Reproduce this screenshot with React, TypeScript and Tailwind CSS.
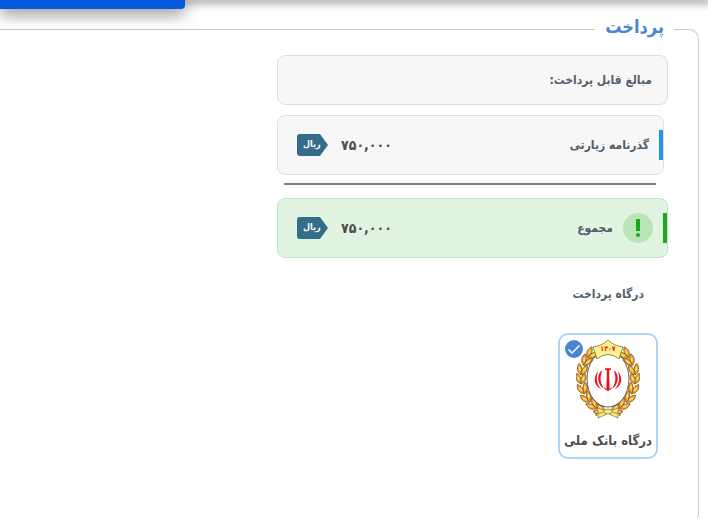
import type { ReactNode } from "react";

const LEAVES = [
  { x: 24, y: 71, r: -68 },
  { x: 17, y: 66, r: -48 },
  { x: 11, y: 59, r: -34 },
  { x: 7, y: 50, r: -18 },
  { x: 5, y: 40, r: -2 },
  { x: 6, y: 31, r: 12 },
  { x: 10, y: 22, r: 28 },
  { x: 15, y: 15, r: 40 },
];

function Branch() {
  return (
    <g stroke="#6f4f1c" strokeWidth="0.7">
      {LEAVES.map((leaf) => (
        <g key={leaf.y} transform={`translate(${leaf.x} ${leaf.y}) rotate(${leaf.r})`}>
          <path d="M0 5C-5 3-6-2-4-6C-1-4 1 0 0 5Z" fill="#f0a030" />
          <path d="M0 5C5 3 6-2 4-6C1-4-1 0 0 5Z" fill="#f0a030" />
          <path d="M-3.500-3C-1.500-2-1 0-1 2C-3 1-4-1-3.500-3Z" fill="#fbe26a" stroke="none" />
          <path d="M3.500-3C1.500-2 1 0 1 2C3 1 4-1 3.500-3Z" fill="#fbe26a" stroke="none" />
        </g>
      ))}
    </g>
  );
}

function BankLogo() {
  return (
    <svg viewBox="0 0 64 80" className="h-20 w-16" role="img" aria-label="بانک ملی">
      <Branch />
      <g transform="translate(64 0) scale(-1 1)">
        <Branch />
      </g>
      <ellipse cx="32" cy="40" rx="21" ry="28" fill="#fff" stroke="#333" strokeWidth="0.8" />
      <path d="M17 8Q26 7 32 1Q38 7 47 8L43 20Q32 11 21 20Z" fill="#fdf08a" stroke="#77733e" strokeWidth="0.8" />
      <text x="32" y="12" textAnchor="middle" fill="#e01b24" className="font-['DejaVu_Sans_Condensed','DejaVu_Sans',sans-serif] text-[7px] font-bold">
        ۱۳۰۷
      </text>
      <g fill="#ec1020">
        <path d="M31 31H33L33.6 49L32 53L30.4 49Z" />
        <path d="M28.5 28.5Q30.5 30.5 32 28.5Q33.5 30.5 35.5 28.5Q35 32 32 31Q29 32 28.5 28.5Z" />
        <path d="M26.500 31C20 35 21 46 28.500 50C24 45 23.500 37 26.500 31Z" />
        <path d="M37.500 31C44 35 43 46 35.500 50C40 45 40.500 37 37.500 31Z" />
        <path d="M22.500 32C16.500 38 18 47 25 50C20.500 45 19.500 38 22.500 32Z" />
        <path d="M41.500 32C47.500 38 46 47 39 50C43.500 45 44.500 38 41.500 32Z" />
        <path d="M28 48Q30 51 32 49Q34 51 36 48Q35 52 32 51Q29 52 28 48Z" />
      </g>
      <g fill="#f8e77b" stroke="#817638" strokeWidth="0.7">
        <path d="M31 72L21 69L23 75Z" />
        <path d="M33 72L43 69L41 75Z" />
        <path d="M30 72L19 76L23 77L22 79L31 75Z" />
        <path d="M34 72L45 76L41 77L42 79L33 75Z" />
        <ellipse cx="32" cy="72.500" rx="4" ry="2.500" />
      </g>
    </svg>
  );
}

function Rial() {
  return (
    <span className="flex h-[22px] w-[31px] items-center justify-end rounded-l-[3px] bg-[#346c89] pb-[2px] pl-[6px] text-[9px] leading-none font-bold text-white [clip-path:polygon(0_0,74%_0,100%_50%,74%_100%,0_100%)]">
      ریال
    </span>
  );
}

function Amount({ value }: { value: string }) {
  return (
    <div className="flex items-center gap-[13px]">
      <span className="text-sm font-bold text-[#4d4d4d]">{value}</span>
      <Rial />
    </div>
  );
}

function Row({ label, value }: { label: ReactNode; value: string }) {
  return (
    <>
      <div className="flex items-center gap-[10px]">{label}</div>
      <Amount value={value} />
    </>
  );
}

export default function App() {
  return (
    <div
      dir="rtl"
      className="h-screen overflow-hidden bg-white font-['DejaVu_Sans_Condensed','DejaVu_Sans',sans-serif] text-xs text-[#535f6b]"
    >
      <header className="flex h-0 justify-end shadow-[0_0_8px_3px_rgba(0,0,0,0.45)]">
        <div className="h-[9px] w-[185px] shrink-0 rounded-br-[4px] bg-[#075ae0] shadow-[0_4px_16px_rgba(0,0,0,0.6)]" />
      </header>

      <main className="pt-[14px] pr-[9px]">
        <fieldset className="rounded-r-[10px] border border-l-0 border-[#c8c8c8] pr-[30px] pb-16">
          <legend className="mr-[-6px] px-[10px] pb-1 text-lg leading-[26px] font-bold text-[#4a86d2]">پرداخت</legend>

          <div className="mt-[11px] w-full max-w-[391px]">
            <div className="flex h-[50px] items-center rounded-[8px] border border-[#dfdfdf] bg-[#f7f7f7] px-[15px] font-bold">
              مبالغ قابل پرداخت:
            </div>

            <div className="mt-[10px] mr-1 flex h-[60px] items-center justify-between rounded-[8px] border border-[#dfdfdf] bg-[#f7f7f7] pl-[19px]">
              <Row
                label={
                  <>
                    <span className="h-[30px] w-1 bg-[#2196f3]" />
                    <span className="font-bold">گذرنامه زیارتی</span>
                  </>
                }
                value="۷۵۰,۰۰۰"
              />
            </div>

            <hr className="mt-2 mr-3 ml-[7px] border-t-2 border-[#808080]" />

            <div className="mt-[13px] flex h-[60px] items-center justify-between rounded-[8px] border border-[#c0e6c0] bg-[#e1f4e1] pl-[19px]">
              <Row
                label={
                  <>
                    <span className="h-[30px] w-1 bg-[#1aaa1a]" />
                    <span className="flex size-[30px] items-center justify-center rounded-full bg-[#b9e5b9]">
                      <svg viewBox="0 0 4 18" className="h-[18px] w-1" fill="#1aaa1a" aria-hidden="true">
                        <path d="M0 0H4V12H0Z" />
                        <circle cx="2" cy="16" r="2" />
                      </svg>
                    </span>
                    <span className="font-bold">مجموع</span>
                  </>
                }
                value="۷۵۰,۰۰۰"
              />
            </div>
          </div>

          <h2 className="mt-6 mr-6 leading-6 font-bold">درگاه پرداخت</h2>

          <label className="relative mt-[27px] mr-[10px] flex h-[126px] w-[100px] cursor-pointer flex-col items-center rounded-[10px] border-2 border-[#a9d5fb] pt-1 font-bold text-[#4d4d4d]">
            <input type="radio" name="gateway" defaultChecked className="peer sr-only" />
            <svg viewBox="0 0 18 18" className="absolute top-[5px] left-[5px] size-[18px]" aria-hidden="true">
              <circle cx="9" cy="9" r="9" fill="#4a86d2" />
              <path d="M3.500 9.500L7 13L14.500 5.500" fill="none" stroke="#fff" strokeWidth="1.500" />
            </svg>
            <BankLogo />
            <span className="mt-[10px] text-[13px] leading-6 whitespace-nowrap">درگاه بانک ملی</span>
          </label>
        </fieldset>
      </main>
    </div>
  );
}
